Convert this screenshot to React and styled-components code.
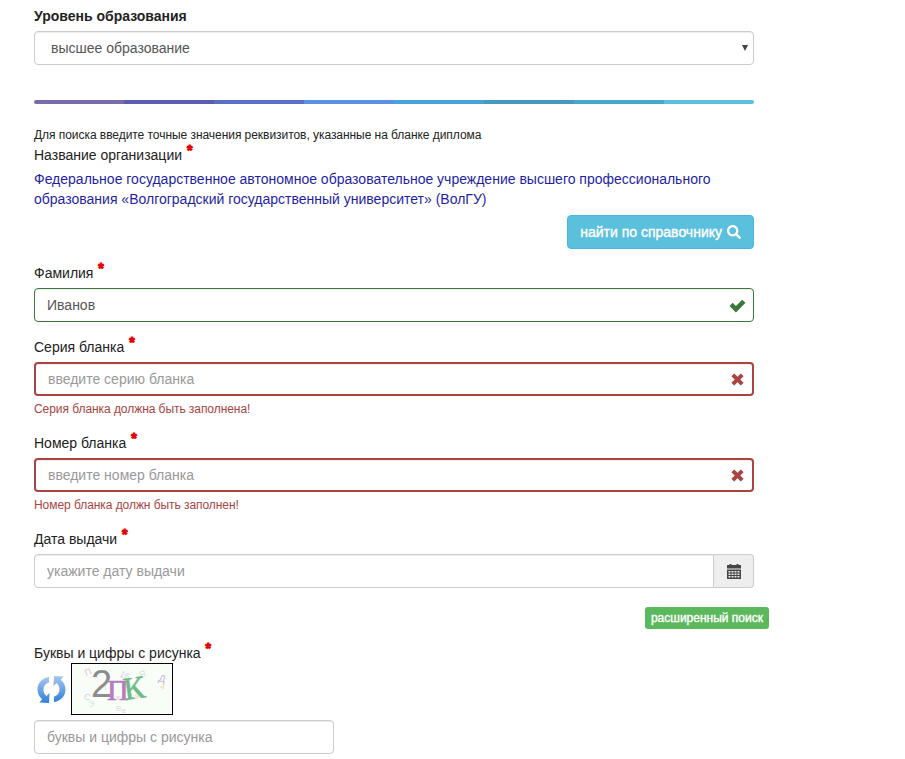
import React from "react";
import styled, { createGlobalStyle } from "styled-components";
import { FaSearch } from "react-icons/fa";

const GlobalStyle = createGlobalStyle`
  html, body {
    margin: 0;
    padding: 0;
    background: #fff;
    font-family: "Liberation Sans", Arial, sans-serif;
    font-size: 14px;
    line-height: 20px;
    color: #333;
  }
  * { box-sizing: border-box; }
`;

const Page = styled.div`
  width: 905px;
  height: 759px;
  overflow: hidden;
  padding: 6px 0 0 34px;
`;

const Form = styled.form`
  width: 720px;
  display: flex;
  flex-direction: column;
`;

// --- Labels ---
const Label = styled.label`
  display: block;
  height: 20px;
  margin-top: ${({ $top }) => $top || 0}px;
  margin-bottom: 5px;
  color: #222;
  font-weight: ${({ $bold }) => ($bold ? 700 : 400)};
`;

const Star = styled.sup`
  display: inline-block;
  color: #e60000;
  font-size: 14px;
  font-weight: 700;
  line-height: 0;
  margin-left: 1px;
  -webkit-text-stroke: 1px #e60000;
  position: relative;
  top: 1px;
`;

// --- Inputs ---
const borders = {
  ok: "1px solid #3c763d",
  bad: "2px solid #a94442",
  none: "1px solid #ccc",
};

const Field = styled.div`
  position: relative;
  width: ${({ $width }) => $width || "100%"};
  height: 34px;
`;

const Input = styled.input`
  display: block;
  width: 100%;
  height: 34px;
  padding: 6px 12px;
  font: inherit;
  color: #555;
  background: #fff;
  border: ${({ $state }) => borders[$state || "none"]};
  border-radius: ${({ $joined }) => ($joined ? "4px 0 0 4px" : "4px")};
  box-shadow: inset 0 1px 1px rgba(0, 0, 0, 0.075);
  outline: none;

  &::placeholder {
    color: #999;
    opacity: 1;
  }
`;

const StateIcon = styled.svg`
  position: absolute;
  top: ${({ $size }) => (34 - $size) / 2}px;
  right: ${({ $size }) => 17 - $size / 2}px;
  width: ${({ $size }) => $size}px;
  height: ${({ $size }) => $size}px;
  fill: ${({ $color }) => $color};
`;

const SelectBox = styled.div`
  height: 34px;
  border: 1px solid #ccc;
  border-radius: 4px;
  padding: 6px 16px;
  color: #555;
  display: flex;
  align-items: center;
  justify-content: space-between;
  box-shadow: inset 0 1px 1px rgba(0, 0, 0, 0.075);
`;

const Caret = styled.span`
  width: 0;
  height: 0;
  margin-right: -11px;
  border-left: 3.5px solid transparent;
  border-right: 3.5px solid transparent;
  border-top: 6px solid #444;
`;

// --- Progress strip ---
const Strip = styled.div`
  display: flex;
  height: 4px;
  margin: 35px 0 23px;
  border-radius: 2px;
  overflow: hidden;
`;

const StripPart = styled.div`
  flex: 1;
  background: ${({ $color }) => $color};
`;

const Hint = styled.div`
  font-size: 12px;
  line-height: 17px;
  letter-spacing: -0.05px;
  color: #222;
  margin-bottom: 1px;
`;

const OrgName = styled.div`
  color: #1f1fa3;
  margin-top: -1px;
`;

const ButtonRow = styled.div`
  display: flex;
  justify-content: flex-end;
  margin-top: 6px;
`;

const FindButton = styled.button`
  height: 34px;
  padding: 0 12px;
  display: flex;
  align-items: center;
  gap: 5px;
  font: 400 14px "Liberation Sans", Arial, sans-serif;
  -webkit-text-stroke: 0.35px #fff;
  color: #fff;
  background: #5bc0de;
  border: 1px solid #46b8da;
  border-radius: 4px;
`;

const ErrorText = styled.div`
  font-size: 12px;
  line-height: 17px;
  letter-spacing: -0.06px;
  color: #a94442;
  margin-top: 5px;
`;

// --- Date group ---
const DateGroup = styled.div`
  display: flex;
  height: 34px;
`;

const Addon = styled.span`
  flex: 0 0 40px;
  display: flex;
  align-items: center;
  justify-content: center;
  background: #eee;
  border: 1px solid #ccc;
  border-left: 0;
  border-radius: 0 4px 4px 0;
`;

const BadgeRow = styled.div`
  display: flex;
  justify-content: flex-end;
  margin: 19px -15px 0 0;
`;

const Badge = styled.span`
  height: 22px;
  padding: 0 6px;
  display: flex;
  align-items: center;
  font-size: 12px;
  -webkit-text-stroke: 0.35px #fff;
  color: #fff;
  background: #5cb85c;
  border-radius: 3px;
`;

// --- Captcha ---
const CaptchaRow = styled.div`
  display: flex;
  align-items: center;
  gap: 4px;
  height: 52px;
  margin: -5px 0 5px;
  padding-left: 2px;
`;

const CaptchaImage = styled.svg`
  display: block;
  width: 102px;
  height: 52px;
  border: 1px solid #000;
  background: #f8fdf8;
`;

const CheckIcon = () => (
  <StateIcon viewBox="0 0 16 16" $size={17} $color="#3c763d">
    <path d="M0.500 8.500 3.500 5.500 6.500 8.500 12.500 2.500 15.500 5.500 6.500 14.500z" />
  </StateIcon>
);

const CrossIcon = () => (
  <StateIcon viewBox="0 0 16 16" $size={15} $color="#a94442">
    <path d="M1.500 4.500 4.500 1.500 8 5 11.500 1.500 14.500 4.500 11 8 14.500 11.500 11.500 14.500 8 11 4.500 14.500 1.500 11.500 5 8z" />
  </StateIcon>
);

const CalendarIcon = () => (
  <svg width="14" height="15" viewBox="0 0 14 15" fill="#444">
    <rect x="0" y="1" width="14" height="3.500" />
    <rect x="2.500" y="0" width="2" height="2" />
    <rect x="9.500" y="0" width="2" height="2" />
    <path d="M0 5.500h14V15H0zM1.500 7v1.500h2V7zm3 0v1.500h2V7zm3 0v1.500h2V7zm3 0v1.500h2V7zm-9 2.500V11h2V9.500zm3 0V11h2V9.500zm3 0V11h2V9.500zm3 0V11h2V9.500zm-9 2.500v1.500h2V12zm3 0v1.500h2V12zm3 0v1.500h2V12zm3 0v1.500h2V12z" fillRule="evenodd" />
  </svg>
);

const RefreshIcon = () => (
  <svg width="31" height="31" viewBox="0 0 31 31">
    <defs>
      <linearGradient id="refreshBlue" x1="0" y1="0" x2="0" y2="1">
        <stop offset="0" stopColor="#a9c8ee" />
        <stop offset="1" stopColor="#2f7fd8" />
      </linearGradient>
    </defs>
    <path
      d="M13 3C6 4 1.500 9 1.500 15.500c0 4 1.800 7.500 4.700 9.800L3.500 28.500 13 29l.5-10-3 3C8.500 20.500 7.500 18.200 7.500 15.500c0-3.500 2.300-6.300 5.500-7z"
      fill="url(#refreshBlue)"
    />
    <path
      d="M18 28c7-1 11.500-6 11.500-12.500 0-4-1.800-7.500-4.700-9.800L27.500 2.500 18 2l-.5 10 3-3c2 1.500 3 3.800 3 6.500 0 3.500-2.300 6.300-5.500 7z"
      fill="url(#refreshBlue)"
    />
  </svg>
);

const noise = [
  ["П", 14, 12, 9, "#dcc0d0", -20],
  ["16", 47, 12, 9, "#d4d4e4", 25],
  ["Я", 68, 14, 9, "#d4e6d4", -15],
  ["Д", 86, 17, 10, "#cdb0e0", 15],
  ["4", 88, 25, 8, "#ecdcb0", 10],
  ["Я", 28, 26, 9, "#dcecd0", 0],
  ["С", 11, 34, 9, "#d8d0e6", 30],
  ["Э", 17, 43, 8, "#d0dfec", -10],
  ["В", 44, 47, 8, "#d0e6d8", 0],
  ["е", 50, 49, 7, "#e0d0d0", 0],
  ["х", 44, 36, 8, "#e6c0d0", 0],
  ["9", 63, 35, 7, "#eed0b0", 0],
];

const Captcha = () => (
  <CaptchaImage viewBox="0 0 100 50">
    {noise.map(([t, x, y, size, fill, r], i) => (
      <text key={i} x={x} y={y} fontSize={size} fill={fill} fontFamily="Liberation Sans" transform={`rotate(${r} ${x} ${y})`}>
        {t}
      </text>
    ))}
    <text x="19" y="33" fontSize="38" fill="#8c8c8c" fontFamily="Liberation Sans">2</text>
    <text x="35" y="36" fontSize="30" fill="#b77cc0" stroke="#b77cc0" strokeWidth="0.7" fontFamily="Liberation Serif">П</text>
    <text x="53" y="36" fontSize="32" fill="#6dbb84" stroke="#6dbb84" strokeWidth="0.5" fontFamily="Liberation Serif" transform="rotate(-8 53 36)">К</text>
  </CaptchaImage>
);

const stripColors = ["#7a6cab", "#5f5cb0", "#5a70c4", "#5b8fe0", "#48a3d6", "#4799c2", "#47a8cb", "#5bc0de"];

const App = () => (
  <Page>
    <GlobalStyle />
    <Form>
      <Label $bold>Уровень образования</Label>
      <SelectBox>
        высшее образование
        <Caret />
      </SelectBox>

      <Strip>
        {stripColors.map((color) => (
          <StripPart key={color} $color={color} />
        ))}
      </Strip>

      <Hint>Для поиска введите точные значения реквизитов, указанные на бланке диплома</Hint>
      <Label>
        Название организации <Star>*</Star>
      </Label>
      <OrgName>
        Федеральное государственное автономное образовательное учреждение высшего профессионального
        образования «Волгоградский государственный университет» (ВолГУ)
      </OrgName>
      <ButtonRow>
        <FindButton type="button">
          найти по справочнику <FaSearch size={14} />
        </FindButton>
      </ButtonRow>

      <Label $top={14}>
        Фамилия <Star>*</Star>
      </Label>
      <Field>
        <Input $state="ok" defaultValue="Иванов" />
        <CheckIcon />
      </Field>

      <Label $top={15}>
        Серия бланка <Star>*</Star>
      </Label>
      <Field>
        <Input $state="bad" placeholder="введите серию бланка" />
        <CrossIcon />
      </Field>
      <ErrorText>Серия бланка должна быть заполнена!</ErrorText>

      <Label $top={15}>
        Номер бланка <Star>*</Star>
      </Label>
      <Field>
        <Input $state="bad" placeholder="введите номер бланка" />
        <CrossIcon />
      </Field>
      <ErrorText>Номер бланка должн быть заполнен!</ErrorText>

      <Label $top={15}>
        Дата выдачи <Star>*</Star>
      </Label>
      <DateGroup>
        <Input $joined placeholder="укажите дату выдачи" />
        <Addon><CalendarIcon /></Addon>
      </DateGroup>

      <BadgeRow>
        <Badge>расширенный поиск</Badge>
      </BadgeRow>

      <Label $top={14}>
        Буквы и цифры с рисунка <Star>*</Star>
      </Label>
      <CaptchaRow>
        <RefreshIcon />
        <Captcha />
      </CaptchaRow>
      <Field $width="300px">
        <Input placeholder="буквы и цифры с рисунка" />
      </Field>
    </Form>
  </Page>
);

export default App;
